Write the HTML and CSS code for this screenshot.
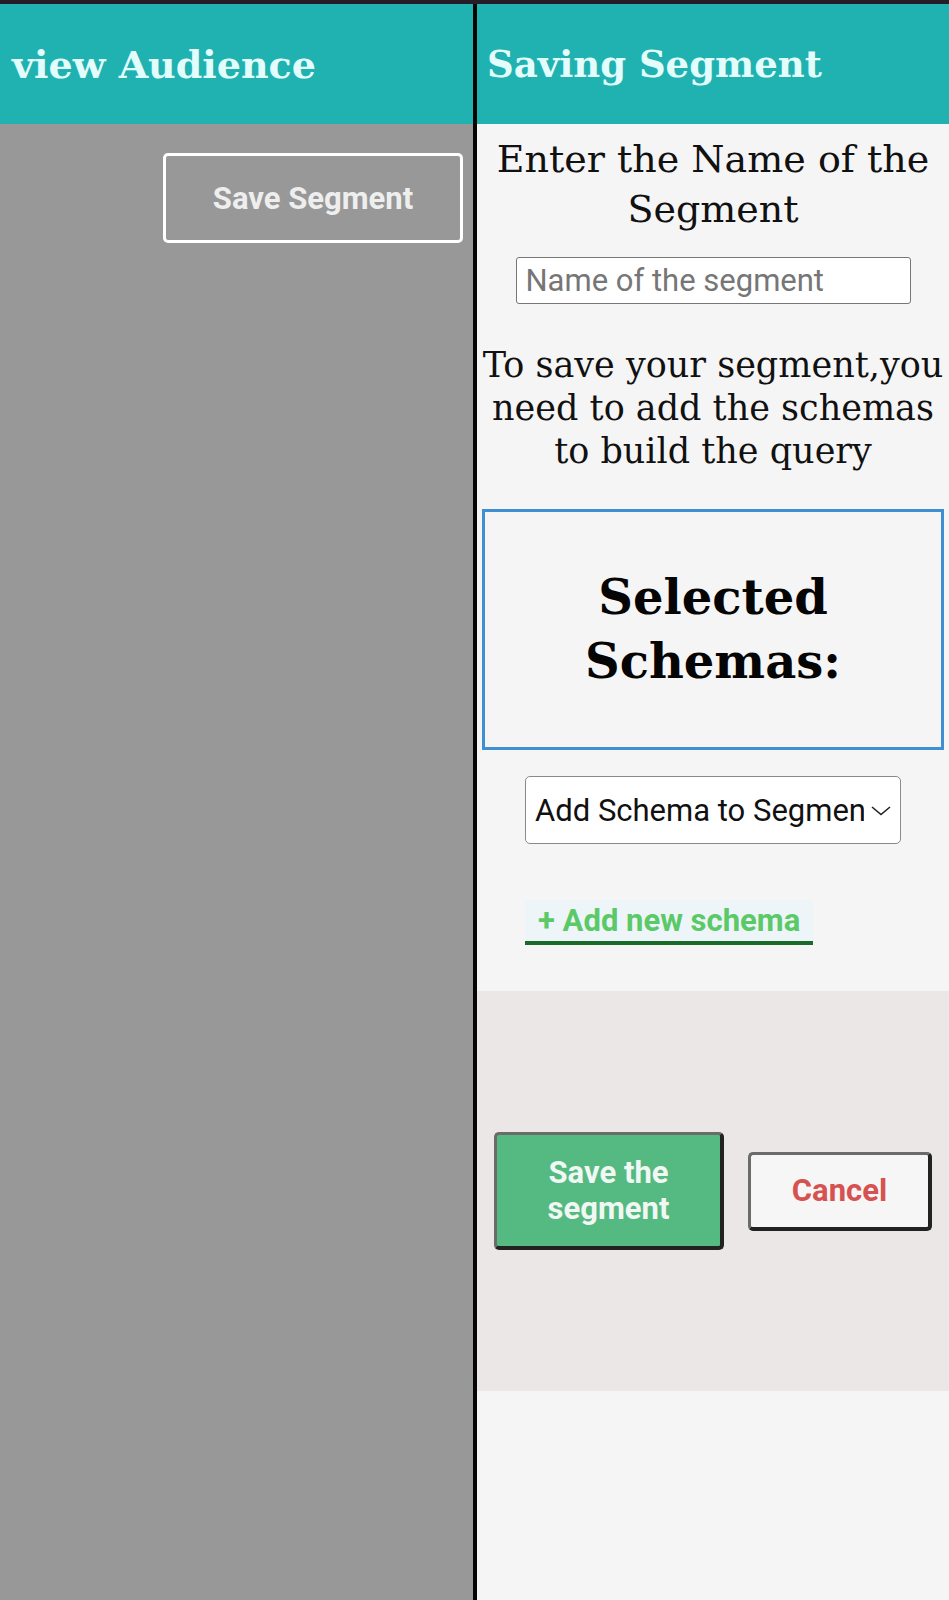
FILE: index.html
```html
<!DOCTYPE html>
<html lang="en">
<head>
<meta charset="utf-8">
<title>Saving Segment</title>
<link rel="stylesheet" href="styles.css">
</head>
<body>
<div class="topbar"></div>
<div class="app">
  <section class="left">
    <header class="head">
      <h1 class="title">view Audience</h1>
    </header>
    <div class="left-body">
      <button class="btn-outline" type="button">Save Segment</button>
    </div>
  </section>
  <section class="right">
    <header class="head">
      <h1 class="title">Saving Segment</h1>
    </header>
    <div class="right-body">
      <h2 class="label">Enter the Name of the<br>Segment</h2>
      <input class="name-input" type="text" placeholder="Name of the segment">
      <p class="hint">To save your segment,you<br>need to add the schemas<br>to build the query</p>
      <div class="schemas-box">
        <h2 class="schemas-title">Selected<br>Schemas:</h2>
      </div>
      <div class="select-wrap">
        <select class="schema-select">
          <option>Add Schema to Segment</option>
        </select>
        <svg class="chev" width="20" height="10" viewBox="0 0 20 10" aria-hidden="true"><path d="M1 1 L10 8.5 L19 1" fill="none" stroke="#222" stroke-width="1.6"/></svg>
      </div>
      <div class="link-row">
        <a class="add-link" href="#">+ Add new schema</a>
      </div>
      <div class="footer">
        <button class="btn-save" type="button">Save the<br>segment</button>
        <button class="btn-cancel" type="button">Cancel</button>
      </div>
    </div>
  </section>
</div>
</body>
</html>
```

FILE: styles.css
```css
* { box-sizing: border-box; }
html, body { margin: 0; padding: 0; }
body {
  background: #f6f5f6;
  font-family: "DejaVu Serif", serif;
  width: 949px;
  height: 1600px;
  overflow: hidden;
}
.topbar {
  height: 4px;
  background: #261d26;
}
.app {
  display: flex;
  height: 1596px;
}
.left {
  width: 477px;
  background: #989898;
  border-right: 4px solid #050505;
  display: flex;
  flex-direction: column;
}
.right {
  flex: 1;
  background: #f6f5f6;
  display: flex;
  flex-direction: column;
}
.head {
  height: 120px;
  background: #20b2b0;
  display: flex;
  align-items: center;
  flex-shrink: 0;
}
.left .head { padding-left: 12px; }
.right .head { padding-left: 10px; }
.title {
  margin: 0;
  font-family: "DejaVu Serif", serif;
  font-weight: bold;
  font-size: 38px;
  color: #e3fdfd;
  white-space: nowrap;
}
.right .title { font-size: 37px; }
.left-body {
  display: flex;
  justify-content: flex-end;
  padding: 29px 10px 0 0;
}
.btn-outline {
  width: 300px;
  height: 90px;
  background: transparent;
  border: 3px solid #ffffff;
  border-radius: 5px;
  color: #eeeeee;
  font-family: Roboto, sans-serif;
  font-weight: bold;
  font-size: 31px;
}
.right-body {
  display: flex;
  flex-direction: column;
  align-items: center;
  text-align: center;
}
.label {
  margin: 10px 0 0;
  font-weight: normal;
  font-size: 38px;
  line-height: 50px;
  color: #111;
  white-space: nowrap;
}
.name-input {
  margin-top: 23px;
  width: 395px;
  height: 47px;
  border: 1.5px solid #777;
  border-radius: 3px;
  background: #fff;
  padding: 0 9px;
  font-family: Roboto, sans-serif;
  font-size: 31px;
  color: #222;
}
.name-input::placeholder { color: #767676; }
.hint {
  margin: 40px 0 0;
  font-size: 35px;
  line-height: 43px;
  color: #111;
  white-space: nowrap;
}
.schemas-box {
  margin-top: 36px;
  width: 462px;
  height: 241px;
  border: 3px solid #3f8fd2;
  padding-top: 53px;
}
.schemas-title {
  margin: 0;
  font-weight: bold;
  font-size: 48px;
  line-height: 64px;
  color: #050505;
}
.select-wrap {
  position: relative;
  margin-top: 26px;
  width: 376px;
  height: 68px;
}
.schema-select {
  appearance: none;
  -webkit-appearance: none;
  width: 100%;
  height: 100%;
  border: 1.5px solid #8a8a8a;
  border-radius: 5px;
  background: #fff;
  padding: 0 36px 0 9px;
  font-family: Roboto, sans-serif;
  font-size: 31px;
  color: #111;
}
.chev {
  position: absolute;
  right: 10px;
  top: 30px;
  pointer-events: none;
}
.link-row {
  margin-top: 56px;
  width: 376px;
  display: flex;
}
.add-link {
  display: inline-block;
  height: 45px;
  padding: 0 13px;
  background: #eef5f9;
  border-bottom: 4px solid #1a6a2a;
  color: #5bc967;
  font-family: Roboto, sans-serif;
  font-weight: bold;
  font-size: 31px;
  line-height: 41px;
  text-decoration: none;
}
.footer {
  margin-top: 46px;
  align-self: stretch;
  height: 400px;
  background: #ece7e7;
  display: flex;
  justify-content: center;
  align-items: center;
  gap: 24px;
}
.btn-save, .btn-cancel {
  border-style: solid;
  border-width: 3px 4px 4px 3px;
  border-color: #6b6b6b #222 #222 #6b6b6b;
  border-radius: 5px;
  font-family: Roboto, sans-serif;
  font-weight: bold;
  font-size: 31px;
  line-height: 36px;
}
.btn-save {
  width: 230px;
  height: 118px;
  background: #54ba82;
  color: #f1f7f2;
}
.btn-cancel {
  width: 184px;
  height: 79px;
  background: #f6f6f6;
  color: #d65251;
}
```
